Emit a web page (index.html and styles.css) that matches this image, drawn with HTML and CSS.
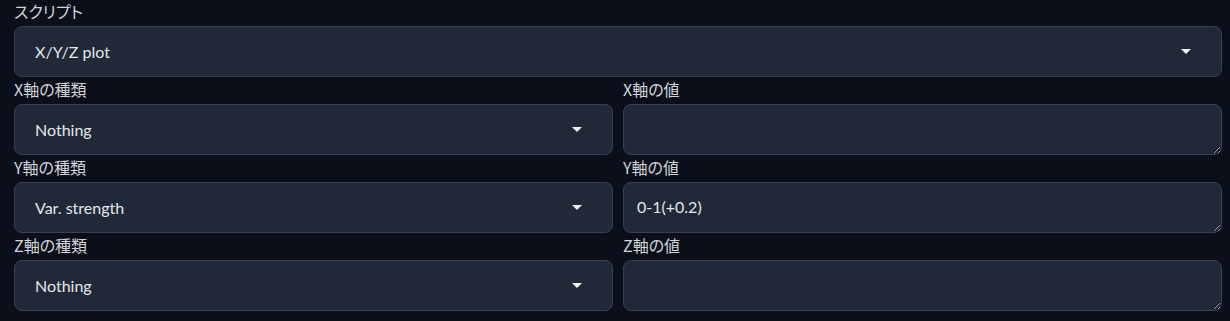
FILE: index.html
```html
<!DOCTYPE html>
<html lang="ja">
<head>
    <meta charset="UTF-8">
    <title>X/Y/Z plot</title>
    <link rel="stylesheet" href="styles.css">
</head>
<body>
    <div class="panel">
        <div class="field">
            <label class="field-label">スクリプト</label>
            <div class="dropdown">
                <span class="value">X/Y/Z plot</span>
                <span class="arrow"></span>
            </div>
        </div>

        <div class="row">
            <div class="field">
                <label class="field-label">X軸の種類</label>
                <div class="dropdown">
                    <span class="value">Nothing</span>
                    <span class="arrow"></span>
                </div>
            </div>
            <div class="field">
                <label class="field-label">X軸の値</label>
                <textarea class="values" rows="1"></textarea>
            </div>
        </div>

        <div class="row">
            <div class="field">
                <label class="field-label">Y軸の種類</label>
                <div class="dropdown">
                    <span class="value">Var. strength</span>
                    <span class="arrow"></span>
                </div>
            </div>
            <div class="field">
                <label class="field-label">Y軸の値</label>
                <textarea class="values" rows="1">0-1(+0.2)</textarea>
            </div>
        </div>

        <div class="row">
            <div class="field">
                <label class="field-label">Z軸の種類</label>
                <div class="dropdown">
                    <span class="value">Nothing</span>
                    <span class="arrow"></span>
                </div>
            </div>
            <div class="field">
                <label class="field-label">Z軸の値</label>
                <textarea class="values" rows="1"></textarea>
            </div>
        </div>
    </div>
</body>
</html>
```

FILE: styles.css
```css
html, body {
    margin: 0;
    padding: 0;
    background: #0b0f19;
    color-scheme: dark;
}
body {
    font-family: Lato, "Noto Sans CJK JP", sans-serif;
    color: #e5e7eb;
}
.panel {
    display: flex;
    flex-direction: column;
    gap: 1px;
    padding: 0 8px 0 14px;
}
.row {
    display: grid;
    grid-template-columns: 1fr 1fr;
    gap: 10px;
}
.field {
    display: flex;
    flex-direction: column;
}
.field-label {
    height: 22px;
    line-height: 22px;
    margin-bottom: 4px;
    font-family: "Noto Sans CJK JP", sans-serif;
    font-size: 16px;
    font-feature-settings: "palt";
    color: #d1d5db;
}
.dropdown {
    box-sizing: border-box;
    height: 51px;
    display: flex;
    align-items: center;
    justify-content: space-between;
    padding: 0 30px 0 20px;
    background: #1f2937;
    border: 1px solid #374151;
    border-radius: 8px;
}
.value {
    font-size: 16px;
    color: #e5e7eb;
}
.arrow {
    width: 0;
    height: 0;
    border-left: 5px solid transparent;
    border-right: 5px solid transparent;
    border-top: 5px solid #f3f4f6;
}
.values {
    box-sizing: border-box;
    height: 51px;
    margin: 0;
    padding: 14px 13px;
    background: #1f2937;
    border: 1px solid #374151;
    border-radius: 8px;
    font-family: Lato, "Noto Sans CJK JP", sans-serif;
    font-size: 16px;
    line-height: 20px;
    color: #e5e7eb;
    resize: vertical;
    outline: none;
}
```
